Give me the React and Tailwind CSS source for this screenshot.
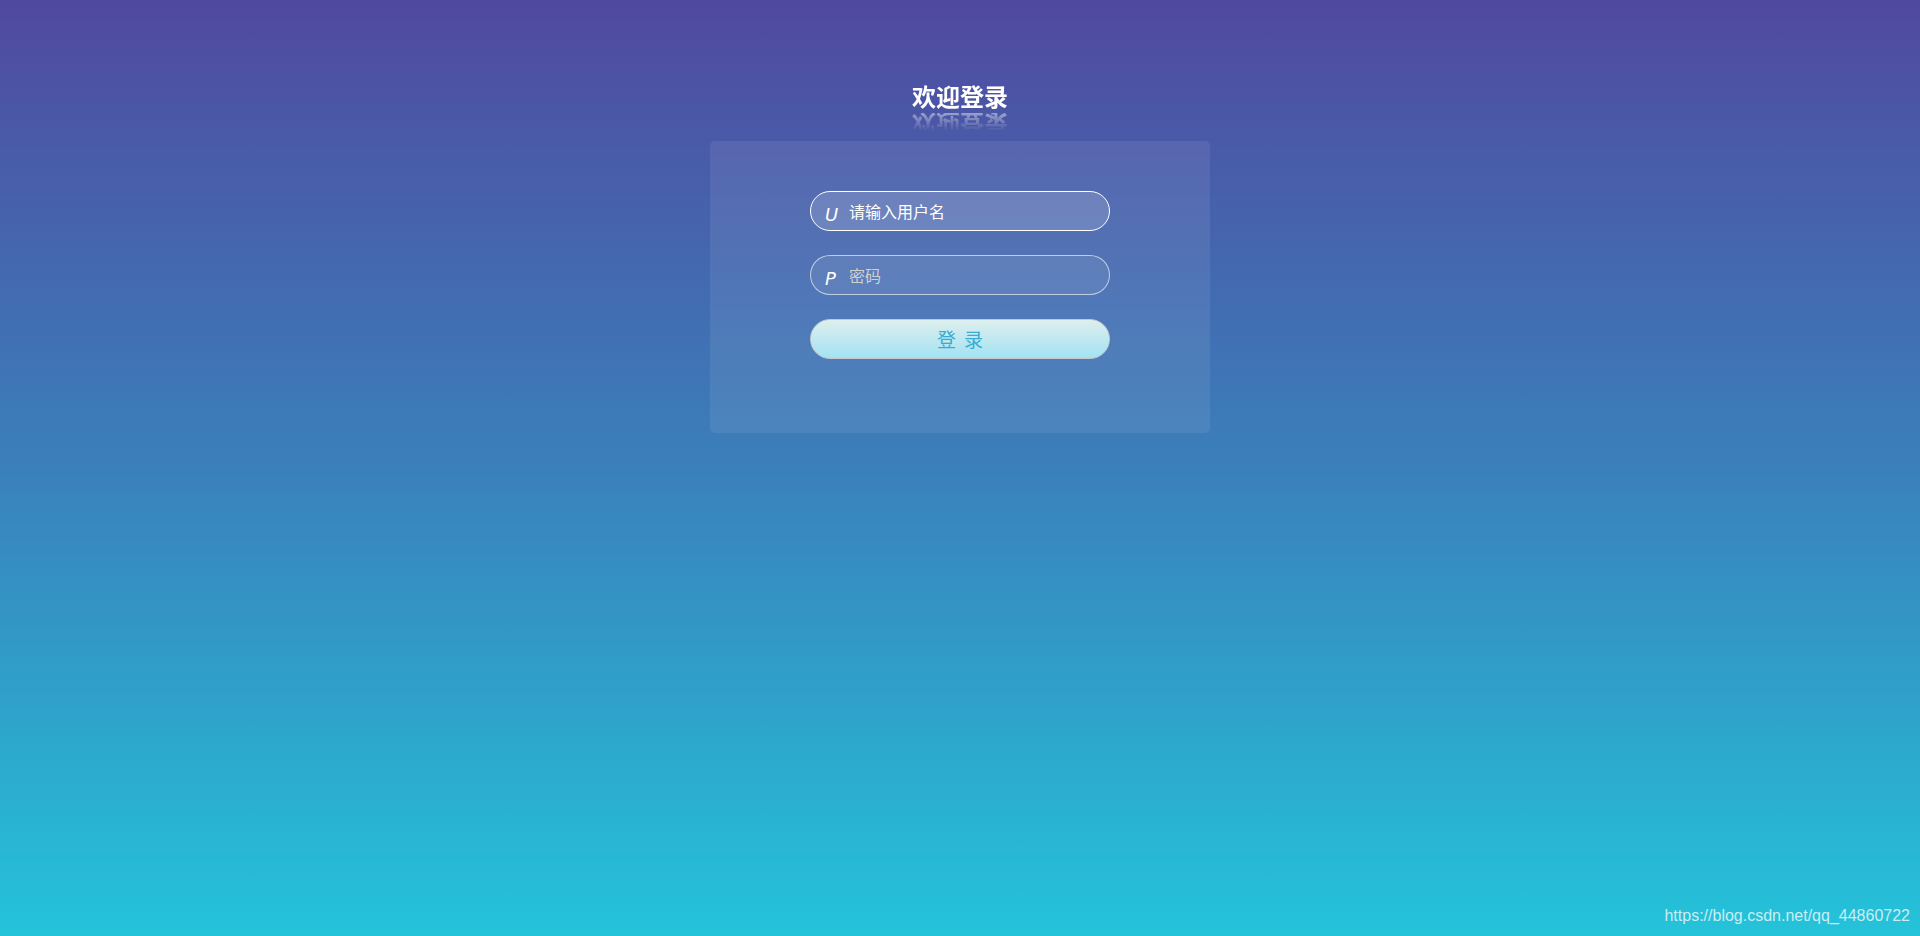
import { useState } from 'react';

const App = () => {
    const [username, setUsername] = useState('');
    const [password, setPassword] = useState('');

    return (
        <div className="relative min-h-[936px] w-full bg-[linear-gradient(to_bottom,#5049a0,#3a80bb_50%,#24c3da)] font-['Microsoft_YaHei','Noto_Sans_CJK_SC',sans-serif]">
            <div className="flex flex-col items-center pt-[84px]">
                <h1 className="h-[24px] text-[24px] leading-[24px] font-semibold text-white [-webkit-box-reflect:below_5px_linear-gradient(transparent_25%,rgba(255,255,255,0.45))]">
                    欢迎登录
                </h1>
                <div className="mt-[33px] w-[500px] h-[292px] rounded-[5px] bg-white/[0.08] pt-[50px] flex flex-col items-center">
                    <div className="flex flex-col gap-[24px] w-[300px]">
                        <div className="flex items-center h-[40px] rounded-full border border-white bg-white/[0.15] px-[14px]">
                            <span className="w-[24px] text-[18px] italic text-white font-['DejaVu_Sans',sans-serif] font-light translate-y-[3px]">U</span>
                            <input
                                autoFocus
                                value={username}
                                onChange={(e) => setUsername(e.target.value)}
                                placeholder="请输入用户名"
                                className="flex-1 bg-transparent outline-none text-[16px] text-white placeholder:text-white caret-white"
                            />
                        </div>
                        <div className="flex items-center h-[40px] rounded-full border border-white/60 bg-white/[0.08] px-[14px]">
                            <span className="w-[24px] text-[18px] italic text-white font-['DejaVu_Sans',sans-serif] font-light translate-y-[3px]">P</span>
                            <input
                                type="password"
                                value={password}
                                onChange={(e) => setPassword(e.target.value)}
                                placeholder="密码"
                                className="flex-1 bg-transparent outline-none text-[16px] text-white placeholder:text-[#d0d0d0]"
                            />
                        </div>
                        <button className="h-[40px] rounded-full border border-[#c4c8cc] bg-[linear-gradient(to_bottom,#ddefee,#a3e2f3)] text-[19px] tracking-[8px] pl-[8px] text-[#36acd6]">
                            登录
                        </button>
                    </div>
                </div>
            </div>
            <div className="absolute right-[10px] bottom-[8px] text-[16px] text-white/75 font-['Liberation_Sans',sans-serif]">
                https://blog.csdn.net/qq_44860722
            </div>
        </div>
    );
};

export default App;
